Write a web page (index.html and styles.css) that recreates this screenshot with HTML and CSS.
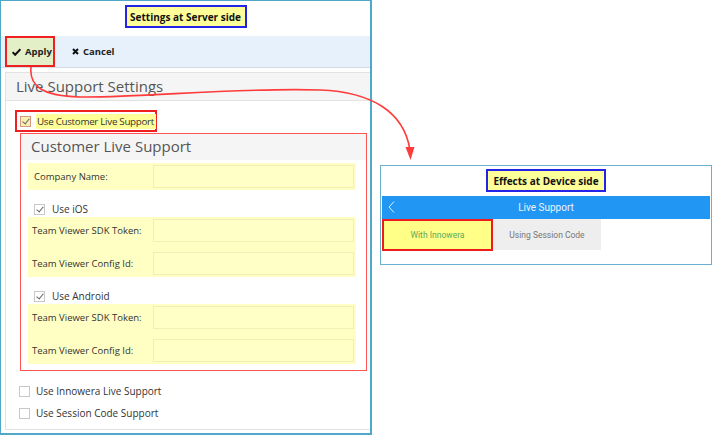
FILE: index.html
```html
<!DOCTYPE html>
<html lang="en">

<head>
    <meta charset="UTF-8">
    <meta name="viewport" content="width=device-width, initial-scale=1.0">
    <title>Live Support Settings</title>
    <link rel="stylesheet" href="styles.css">
</head>

<body>

    <!-- Server side -->
    <div class="server">
        <div class="note-row">
            <span class="note">Settings at Server side</span>
        </div>

        <div class="toolbar">
            <button class="tool-button apply">
                <svg width="9" height="8" viewBox="0 0 9 8"><path d="M0.6 4.2 L3.2 6.8 L8.4 1.2" fill="none" stroke="#111" stroke-width="2"/></svg>
                Apply
            </button>
            <button class="tool-button">
                <svg width="7" height="7" viewBox="0 0 7 7"><path d="M1 1 L6 6 M6 1 L1 6" fill="none" stroke="#111" stroke-width="2"/></svg>
                Cancel
            </button>
        </div>

        <div class="panel">
            <div class="panel-head">Live Support Settings</div>
            <div class="panel-body">
                <div class="check-row main-check">
                    <span class="box checked"></span>
                    <span class="check-label">Use Customer Live Support</span>
                </div>

                <div class="sub-panel">
                    <div class="sub-head">Customer Live Support</div>

                    <div class="field-group first">
                        <div class="field"><label>Company Name:</label><span class="input"></span></div>
                    </div>

                    <div class="check-row sub-check">
                        <span class="box ticked"></span>
                        <span>Use iOS</span>
                    </div>
                    <div class="field-group">
                        <div class="field"><label>Team Viewer SDK Token:</label><span class="input"></span></div>
                        <div class="field"><label>Team Viewer Config Id:</label><span class="input"></span></div>
                    </div>

                    <div class="check-row sub-check">
                        <span class="box ticked"></span>
                        <span>Use Android</span>
                    </div>
                    <div class="field-group">
                        <div class="field"><label>Team Viewer SDK Token:</label><span class="input"></span></div>
                        <div class="field"><label>Team Viewer Config Id:</label><span class="input"></span></div>
                    </div>
                </div>

                <div class="check-row plain">
                    <span class="box"></span>
                    <span>Use Innowera Live Support</span>
                </div>
                <div class="check-row plain">
                    <span class="box"></span>
                    <span>Use Session Code Support</span>
                </div>
            </div>
        </div>
    </div>

    <!-- Device side -->
    <div class="device">
        <div class="note-row">
            <span class="note">Effects at Device side</span>
        </div>
        <div class="app-bar">
            <svg class="back" width="7" height="12" viewBox="0 0 7 12"><path d="M6 0.5 L1 6 L6 11.5" fill="none" stroke="#e3f0fd" stroke-width="1"/></svg>
            Live Support
        </div>
        <div class="tabs">
            <span class="tab active">With Innowera</span>
            <span class="tab">Using Session Code</span>
        </div>
    </div>

    <!-- Connector arrow -->
    <svg class="arrow" width="716" height="435" viewBox="0 0 716 435">
        <path d="M31 67 C 29 86, 42 96, 80 97 C 140 98, 240 87, 320 90 C 372 92, 404 112, 410 150" fill="none" stroke="#ff3b3b" stroke-width="1.6"/>
        <polygon points="405.5,147 414.5,147 410.5,160" fill="#ff3b3b"/>
    </svg>

</body>

</html>
```

FILE: styles.css
```css
/* Global */
body {
    margin: 0;
    width: 716px;
    height: 435px;
    overflow: hidden;
    background: #ffffff;
    font-family: "Open Sans", Arial, sans-serif;
    color: #333;
    display: flex;
    align-items: flex-start;
    position: relative;
}

.note-row {
    display: flex;
    justify-content: center;
}

.note {
    background: #ffff99;
    border: 2px solid #2424e8;
    font-weight: bold;
    font-size: 10px;
    color: #111;
    display: flex;
    align-items: center;
    justify-content: center;
    box-sizing: border-box;
    height: 23px;
}

/* Server side panel */
.server {
    width: 372px;
    height: 435px;
    box-sizing: border-box;
    border: 2px solid #4fa8c8;
    border-left-width: 1px;
    border-top-width: 1px;
}

.server .note-row {
    padding-top: 4px;
}

.server .note {
    width: 122px;
}

.toolbar {
    margin-top: 8px;
    height: 31px;
    background-color: #e6f1fc;
    border-bottom: 1px solid #d3dbe3;
    display: flex;
    align-items: stretch;
    padding-left: 4px;
}

.tool-button {
    font-family: "Open Sans", Arial, sans-serif;
    font-size: 9.5px;
    font-weight: bold;
    color: #222;
    background: none;
    border: none;
    padding: 0 0 0 17px;
    display: flex;
    align-items: center;
    gap: 4px;
}

.tool-button.apply {
    width: 50px;
    background-color: #e3efc6;
    border: 2px solid #ee2020;
    padding-left: 5px;
    box-sizing: border-box;
}

.panel {
    margin: 4px 0 0 4px;
    height: 356px;
    border: 1px solid #e2e2e2;
    border-right: none;
}

.panel-head {
    height: 27px;
    background-color: #f5f5f5;
    border-bottom: 1px solid #e2e2e2;
    font-size: 15px;
    color: #555;
    padding-left: 10px;
    line-height: 27px;
}

.panel-body {
    padding: 9px 0 0 9px;
}

.check-row {
    display: flex;
    align-items: center;
    font-size: 10px;
    color: #333;
    white-space: nowrap;
}

.box {
    width: 9px;
    height: 9px;
    border: 1px solid #c8c8c8;
    background: #fff;
    position: relative;
    flex: none;
}

.box.ticked::after,
.box.checked::after {
    content: "";
    position: absolute;
    left: 3px;
    top: 0px;
    width: 3px;
    height: 6px;
    border-right: 1.2px solid #666;
    border-bottom: 1.2px solid #666;
    transform: rotate(40deg);
}

.main-check {
    width: 142px;
    height: 22px;
    box-sizing: border-box;
    border: 2px solid #ee2020;
    padding-left: 3px;
    gap: 5px;
}

.main-check .box {
    background: #f7f0b0;
    border-color: #d49a80;
}

.check-label {
    background-color: #ffff99;
    padding: 1px 2px 1px 1px;
    font-size: 9.8px;
    letter-spacing: -0.3px;
}

.sub-panel {
    margin: 1px 3px 0 5px;
    height: 238px;
    border: 1px solid #ff5555;
    box-sizing: border-box;
}

.sub-head {
    height: 26px;
    background-color: #f5f5f5;
    font-size: 15px;
    color: #555;
    padding-left: 10px;
    line-height: 25px;
}

.field-group {
    margin: 0 10px 0 7px;
    background-color: #ffffc4;
    padding: 2px 2px;
}

.field-group.first {
    margin-top: 3px;
}

.field {
    display: flex;
    align-items: center;
    height: 23px;
    font-size: 9.5px;
    color: #333;
}

.field + .field {
    margin-top: 10px;
}

.field label {
    width: 123px;
    box-sizing: border-box;
    padding-left: 2px;
    flex: none;
}

.input {
    flex: 1;
    height: 21px;
    border: 1px solid #efefb6;
    background-color: #ffffc6;
}

.first .field label {
    padding-left: 4px;
}

.sub-check {
    margin: 11px 0 0 13px;
    height: 16px;
    gap: 7px;
}

.plain {
    margin-left: 4px;
    height: 22px;
    gap: 6px;
}

.sub-panel + .plain {
    margin-top: 9px;
}

/* Device side panel */
.device {
    margin: 165px 0 0 8px;
    width: 332px;
    height: 100px;
    box-sizing: border-box;
    border: 1px solid #6ab2cf;
    padding: 0 1px;
}

.device .note-row {
    padding-top: 3px;
}

.device .note {
    width: 120px;
}

.app-bar {
    margin-top: 4px;
    height: 23px;
    background-color: #2196f3;
    color: #eaf4fe;
    font-family: Roboto, Arial, sans-serif;
    font-size: 10px;
    display: flex;
    align-items: center;
    justify-content: center;
    position: relative;
}

.app-bar .back {
    position: absolute;
    left: 6px;
    top: 5px;
}

.tabs {
    display: flex;
}

.tab {
    width: 108px;
    height: 31px;
    background-color: #eeeeee;
    color: #777;
    font-family: Roboto, Arial, sans-serif;
    font-size: 8.5px;
    display: flex;
    align-items: center;
    justify-content: center;
}

.tab.active {
    width: 111px;
    height: 32px;
    box-sizing: border-box;
    background-color: #ffff88;
    border: 2px solid #ee1c1c;
    color: #5ea85a;
}

.arrow {
    position: absolute;
    left: 0;
    top: 0;
    pointer-events: none;
}
```
